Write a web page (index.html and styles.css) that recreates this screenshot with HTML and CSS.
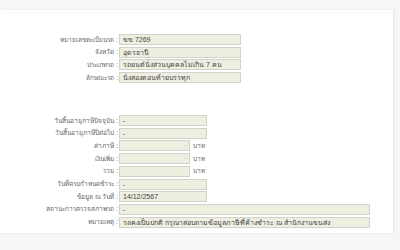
FILE: index.html
```html
<!DOCTYPE html>
<html lang="th">
<head>
  <meta charset="UTF-8">
  <title>ข้อมูลรถ</title>
  <link rel="stylesheet" href="styles.css">
</head>
<body>
  <div class="card">
    <div class="section">
      <div class="row"><label>หมายเลขทะเบียนรถ :</label><div class="field w-mid">ขข 7269</div></div>
      <div class="row"><label>จังหวัด :</label><div class="field w-mid">อุดรธานี</div></div>
      <div class="row"><label>ประเภทรถ :</label><div class="field w-mid">รถยนต์นั่งส่วนบุคคลไม่เกิน 7 คน</div></div>
      <div class="row"><label>ลักษณะรถ :</label><div class="field w-mid">นั่งสองตอนท้ายบรรทุก</div></div>
    </div>

    <div class="section second">
      <div class="row"><label>วันสิ้นอายุภาษีปัจจุบัน :</label><div class="field w-short">-</div></div>
      <div class="row"><label>วันสิ้นอายุภาษีปีต่อไป :</label><div class="field w-short">-</div></div>
      <div class="row"><label>ค่าภาษี :</label><div class="field select"><span class="arrow">-</span></div><span class="unit">บาท</span></div>
      <div class="row"><label>เงินเพิ่ม :</label><div class="field select"><span class="arrow">-</span></div><span class="unit">บาท</span></div>
      <div class="row"><label>รวม :</label><div class="field select"><span class="arrow">-</span></div><span class="unit">บาท</span></div>
      <div class="row"><label>วันที่ครบกำหนดชำระ :</label><div class="field w-short">-</div></div>
      <div class="row"><label>ข้อมูล ณ วันที่ :</label><div class="field w-short">14/12/2567</div></div>
      <div class="row"><label>สถานะการตรวจสภาพรถ :</label><div class="field w-long">-</div></div>
      <div class="row"><label>หมายเหตุ :</label><div class="field w-long">รถคงเป็นปกติ กรุณาสอบถามข้อมูลภาษีที่ค้างชำระ ณ สำนักงานขนส่ง</div></div>
    </div>
  </div>

  <div class="actions">
    <button>ปิดหน้าต่าง</button>
  </div>
</body>
</html>
```

FILE: styles.css
```css
body {
  margin: 0;
  background: #f6f6f6;
  font-family: "Liberation Sans", "Noto Sans", sans-serif;
  color: #444;
}
.card {
  margin-top: 10px;
  width: 393px;
  height: 223px;
  box-sizing: border-box;
  padding-top: 24px;
  background: #fff;
  box-shadow: 1px 0 2px rgba(0, 0, 0, 0.08);
}
.section {
  display: flex;
  flex-direction: column;
  gap: 1.7px;
}
.second {
  margin-top: 32px;
}
.row {
  display: flex;
  align-items: center;
  height: 11px;
}
.row label {
  width: 119px;
  flex: none;
  padding-right: 1px;
  box-sizing: border-box;
  text-align: right;
  font-size: 6.5px;
  color: #666;
  white-space: nowrap;
}
.field {
  height: 11px;
  box-sizing: border-box;
  background: #efefe1;
  border: 1px solid #d2d2c8;
  font-size: 7px;
  line-height: 9px;
  padding-left: 3px;
  color: #444;
  white-space: nowrap;
  overflow: hidden;
}
.w-mid { width: 122px; }
.w-short { width: 88px; }
.w-long { width: 251px; }
.select {
  width: 71px;
  display: flex;
  justify-content: flex-end;
}
.arrow {
  color: #bbb;
  padding-right: 2px;
  font-size: 6px;
}
.unit {
  margin-left: 3px;
  font-size: 6.5px;
  color: #666;
}
.actions {
  padding: 13px 0 0 140px;
}
.actions button {
  width: 50px;
  height: 14px;
  font-family: "Liberation Sans", "Noto Sans", sans-serif;
  font-size: 6.5px;
  color: #555;
  background: #f3f3f3;
  border: 1px solid #c8c8c8;
  border-radius: 2px;
  padding: 0;
}
```
